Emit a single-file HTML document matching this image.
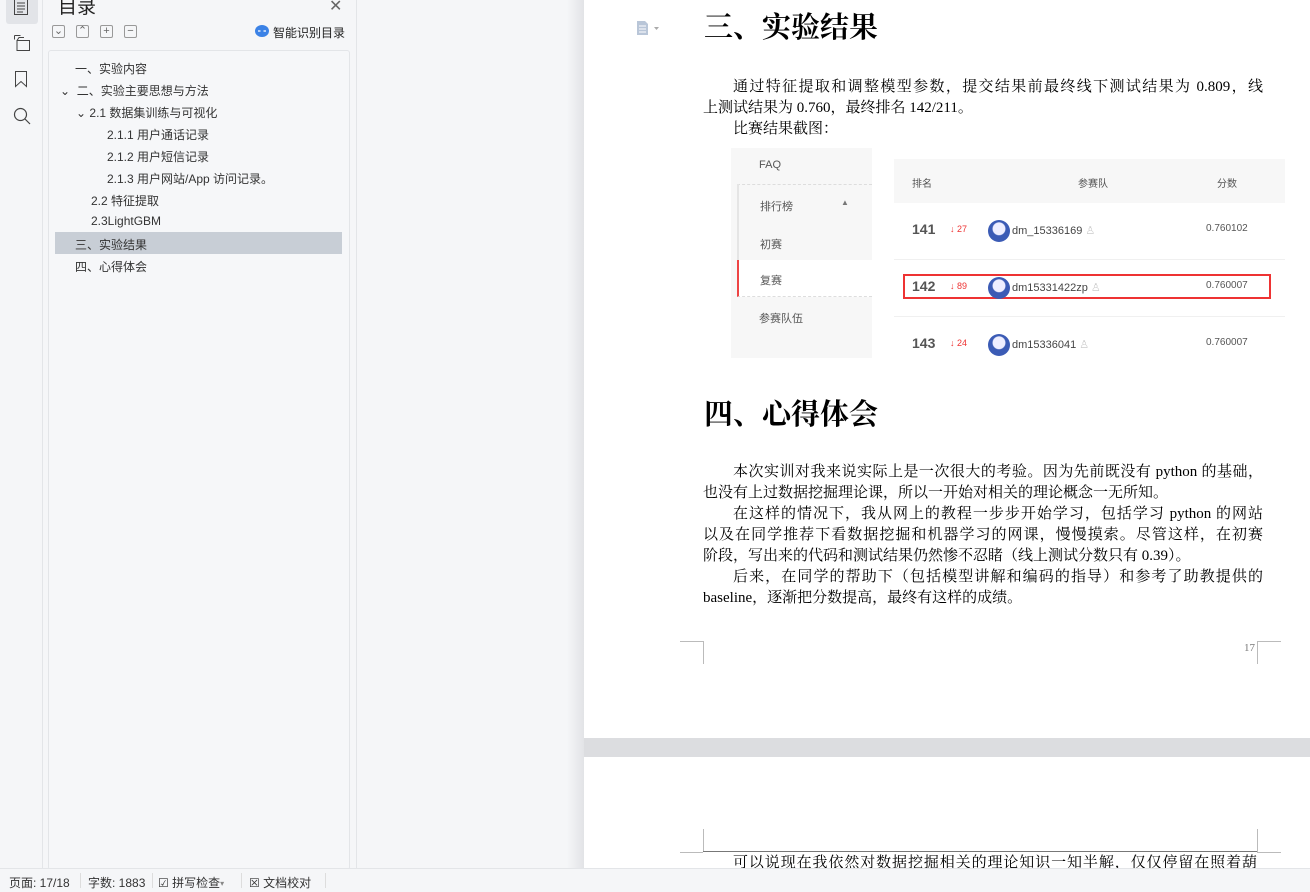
<!DOCTYPE html>
<html><head><meta charset="utf-8"><style>
*{margin:0;padding:0;box-sizing:border-box}
body{width:1310px;height:892px;overflow:hidden;position:relative;background:#f5f6f8;font-family:"Liberation Sans","Noto Sans CJK SC",sans-serif;color:#333}
.abs{position:absolute}
.ib{left:0;top:0;width:43px;height:868px;background:#f5f6f8;border-right:1px solid #e3e5e8}
.side{left:43px;top:0;width:314px;height:868px;background:#f5f6f8;border-right:1px solid #e3e5e8}
.tree{left:48px;top:50px;width:302px;height:820px;border:1px solid #e3e5e8;border-radius:3px;background:#f6f7f9}
.ti{position:absolute;font-size:12px;color:#333;white-space:nowrap}
.gray{left:357px;top:0;width:227px;height:868px;background:linear-gradient(to right,#f5f6f8 0,#f5f6f8 210px,#e2e3e6 227px)}
.page{left:584px;background:#fff;width:726px}
.serif{font-family:"Liberation Serif","Noto Serif CJK SC",serif;color:#000}
.ln{position:absolute;left:703px;width:560px;font-size:15px;white-space:nowrap;text-align:justify;text-align-last:justify;line-height:20px}
.h{position:absolute;left:704px;font-size:29px;font-weight:bold;line-height:34px}
.status{left:0;top:868px;width:1310px;height:24px;background:#f5f6f8;border-top:1px solid #e3e5e8;font-size:12px;color:#333}
.status span{position:absolute;top:5px}
.tb{position:absolute;width:13px;height:13px;border:1px solid #999;border-radius:2px;top:25px;font-size:11px;line-height:11px;text-align:center;color:#666}
.c{position:absolute;background:#bbb}
</style></head><body>
<div class="abs ib"></div>
<div class="abs" style="left:6px;top:-4px;width:32px;height:28px;background:#e2e4e8;border-radius:3px"></div>
<svg class="abs" style="left:13px;top:0" width="16" height="16" viewBox="0 0 16 16" fill="none" stroke="#444" stroke-width="1"><path d="M1.5 0v14.5h13V0M4 3h8M4 6h8M4 9h8M4 12h6"/></svg>
<svg class="abs" style="left:13px;top:34px" width="18" height="18" viewBox="0 0 18 18" fill="none" stroke="#444" stroke-width="1"><path d="M1.5 1.5h6M1.5 1.5v4M4 6.5h12.5v10h-12.5zM4 6.5l2-3h5"/></svg>
<svg class="abs" style="left:14px;top:70px" width="14" height="18" viewBox="0 0 14 18" fill="none" stroke="#444" stroke-width="1"><path d="M1.5 1.5h11v15l-5.5-5-5.5 5z"/></svg>
<svg class="abs" style="left:13px;top:107px" width="18" height="18" viewBox="0 0 18 18" fill="none" stroke="#444" stroke-width="1.2"><circle cx="7.5" cy="7.5" r="6"/><path d="M12 12l5 5"/></svg>
<div class="abs side"></div>
<div class="abs" style="left:58px;top:-8px;font-size:19px;color:#222">目录</div>
<div class="abs" style="left:329px;top:-4px;font-size:16px;color:#666">✕</div>
<div class="tb" style="left:52px">⌄</div><div class="tb" style="left:76px">⌃</div><div class="tb" style="left:100px">+</div><div class="tb" style="left:124px">−</div>
<svg class="abs" style="left:255px;top:25px" width="14" height="12" viewBox="0 0 14 12"><ellipse cx="7" cy="6" rx="7" ry="6" fill="#3b82e6"/><path d="M3 6h2.5M8.5 6h2.5" stroke="#fff" stroke-width="1.3"/></svg>
<div class="abs" style="left:273px;top:24px;font-size:12px;color:#222">智能识别目录</div>
<div class="abs tree"></div>
<div class="abs" style="left:55px;top:232px;width:287px;height:22px;background:#c8ced6"></div>
<div class="ti" style="left:75px;top:60px">一、实验内容</div>
<div class="ti" style="left:60px;top:82px">⌄&nbsp; 二、实验主要思想与方法</div>
<div class="ti" style="left:76px;top:104px">⌄&nbsp;2.1 数据集训练与可视化</div>
<div class="ti" style="left:107px;top:126px">2.1.1 用户通话记录</div>
<div class="ti" style="left:107px;top:148px">2.1.2 用户短信记录</div>
<div class="ti" style="left:107px;top:170px">2.1.3 用户网站/App 访问记录。</div>
<div class="ti" style="left:91px;top:192px">2.2 特征提取</div>
<div class="ti" style="left:91px;top:214px">2.3LightGBM</div>
<div class="ti" style="left:75px;top:236px">三、实验结果</div>
<div class="ti" style="left:75px;top:258px">四、心得体会</div>
<div class="abs gray"></div>
<div class="abs page" style="top:0;height:738px"></div>
<div class="abs" style="left:584px;top:738px;width:726px;height:19px;background:#dcdde0"></div>
<div class="abs page" style="top:757px;height:111px"></div>
<svg class="abs" style="left:637px;top:21px" width="26" height="14" viewBox="0 0 26 14"><path d="M0 0h8l3 3v11H0z" fill="#b9c6d8"/><path d="M2 5h7M2 8h7M2 11h7" stroke="#fff"/><path d="M17 6h5l-2.5 3z" fill="#aaa"/></svg>
<div class="h serif" style="top:11px">三、实验结果</div>
<div class="ln serif" style="top:77px;text-indent:30px">通过特征提取和调整模型参数，提交结果前最终线下测试结果为 0.809，线</div>
<div class="ln serif" style="top:98px;text-align:left;text-align-last:left">上测试结果为 0.760，最终排名 142/211。</div>
<div class="ln serif" style="top:119px;text-align:left;text-align-last:left;text-indent:30px">比赛结果截图：</div>
<!-- screenshot -->
<div class="abs" style="left:731px;top:148px;width:141px;height:210px;background:#f7f7f7;font-size:11px;color:#555">
<div class="abs" style="left:28px;top:11px">FAQ</div>
<div class="abs" style="left:6px;top:36px;width:135px;border-top:1px dashed #ddd"></div>
<div class="abs" style="left:6px;top:36px;width:2px;height:76px;background:#e5e5e5"></div>
<div class="abs" style="left:29px;top:50px">排行榜</div>
<div class="abs" style="left:110px;top:50px;font-size:8px;color:#777">▲</div>
<div class="abs" style="left:29px;top:88px">初赛</div>
<div class="abs" style="left:6px;top:112px;width:135px;height:37px;background:#fff;border-left:2px solid #e44;border-bottom:1px dashed #ddd"></div>
<div class="abs" style="left:29px;top:124px">复赛</div>
<div class="abs" style="left:28px;top:162px">参赛队伍</div>
</div>
<div class="abs" style="left:894px;top:159px;width:391px;height:44px;background:#f7f7f7;font-size:10px;color:#555">
<span class="abs" style="left:18px;top:16px">排名</span><span class="abs" style="left:184px;top:16px">参赛队</span><span class="abs" style="left:323px;top:16px">分数</span></div>
<div class="abs" style="left:894px;top:259px;width:391px;border-top:1px solid #f0f0f0"></div>
<div class="abs" style="left:894px;top:316px;width:391px;border-top:1px solid #f0f0f0"></div>
<div class="abs" style="left:903px;top:274px;width:368px;height:25px;border:2px solid #e33"></div>
<div class="abs" style="left:912px;top:221px;font-size:14px;font-weight:bold;color:#555">141</div>
<div class="abs" style="left:912px;top:278px;font-size:14px;font-weight:bold;color:#555">142</div>
<div class="abs" style="left:912px;top:335px;font-size:14px;font-weight:bold;color:#555">143</div>
<div class="abs" style="left:950px;top:224px;font-size:9px;color:#e33">↓ 27</div>
<div class="abs" style="left:950px;top:281px;font-size:9px;color:#e33">↓ 89</div>
<div class="abs" style="left:950px;top:338px;font-size:9px;color:#e33">↓ 24</div>
<div class="abs" style="left:988px;top:220px;width:22px;height:22px;border-radius:50%;background:radial-gradient(circle at 50% 40%,#eef 35%,#3b5bb5 40%)"></div>
<div class="abs" style="left:988px;top:277px;width:22px;height:22px;border-radius:50%;background:radial-gradient(circle at 50% 40%,#eef 35%,#3b5bb5 40%)"></div>
<div class="abs" style="left:988px;top:334px;width:22px;height:22px;border-radius:50%;background:radial-gradient(circle at 50% 40%,#eef 35%,#3b5bb5 40%)"></div>
<div class="abs" style="left:1012px;top:224px;font-size:11px;color:#444">dm_15336169 <span style="color:#ccc">♙</span></div>
<div class="abs" style="left:1012px;top:281px;font-size:11px;color:#444">dm15331422zp <span style="color:#ccc">♙</span></div>
<div class="abs" style="left:1012px;top:338px;font-size:11px;color:#444">dm15336041 <span style="color:#ccc">♙</span></div>
<div class="abs" style="left:1206px;top:223px;font-size:10px;color:#555">0.760102</div>
<div class="abs" style="left:1206px;top:280px;font-size:10px;color:#555">0.760007</div>
<div class="abs" style="left:1206px;top:337px;font-size:10px;color:#555">0.760007</div>
<div class="h serif" style="top:398px">四、心得体会</div>
<div class="ln serif" style="top:462px;text-indent:30px">本次实训对我来说实际上是一次很大的考验。因为先前既没有 python 的基础，</div>
<div class="ln serif" style="top:483px;text-align:left;text-align-last:left">也没有上过数据挖掘理论课，所以一开始对相关的理论概念一无所知。</div>
<div class="ln serif" style="top:504px;text-indent:30px">在这样的情况下，我从网上的教程一步步开始学习，包括学习 python 的网站</div>
<div class="ln serif" style="top:525px">以及在同学推荐下看数据挖掘和机器学习的网课，慢慢摸索。尽管这样，在初赛</div>
<div class="ln serif" style="top:546px;text-align:left;text-align-last:left">阶段，写出来的代码和测试结果仍然惨不忍睹（线上测试分数只有 0.39）。</div>
<div class="ln serif" style="top:567px;text-indent:30px">后来，在同学的帮助下（包括模型讲解和编码的指导）和参考了助教提供的</div>
<div class="ln serif" style="top:588px;text-align:left;text-align-last:left">baseline，逐渐把分数提高，最终有这样的成绩。</div>
<div class="c" style="left:680px;top:641px;width:23px;height:1px"></div><div class="c" style="left:703px;top:641px;width:1px;height:23px"></div>
<div class="c" style="left:1257px;top:641px;width:24px;height:1px"></div><div class="c" style="left:1257px;top:641px;width:1px;height:23px"></div>
<div class="abs serif" style="left:1244px;top:642px;font-size:11px;color:#777">17</div>
<div class="c" style="left:703px;top:829px;width:1px;height:23px"></div><div class="c" style="left:680px;top:852px;width:23px;height:1px"></div>
<div class="c" style="left:1257px;top:829px;width:1px;height:23px"></div><div class="c" style="left:1257px;top:852px;width:24px;height:1px"></div>
<div class="abs" style="left:703px;top:851px;width:554px;height:1px;background:#777"></div>
<div class="ln serif" style="top:853px;text-indent:30px;width:554px">可以说现在我依然对数据挖掘相关的理论知识一知半解，仅仅停留在照着葫</div>
<div class="abs status">
<span style="left:9px">页面: 17/18</span><span style="left:88px">字数: 1883</span>
<span style="left:158px">☑ 拼写检查 <span style="font-size:8px;color:#888">▾</span></span>
<span style="left:249px">☒ 文档校对</span>
<div class="abs" style="left:80px;top:4px;width:1px;height:15px;background:#ddd"></div>
<div class="abs" style="left:152px;top:4px;width:1px;height:15px;background:#ddd"></div>
<div class="abs" style="left:241px;top:4px;width:1px;height:15px;background:#ddd"></div>
<div class="abs" style="left:325px;top:4px;width:1px;height:15px;background:#ddd"></div>
</div>
</body></html>
